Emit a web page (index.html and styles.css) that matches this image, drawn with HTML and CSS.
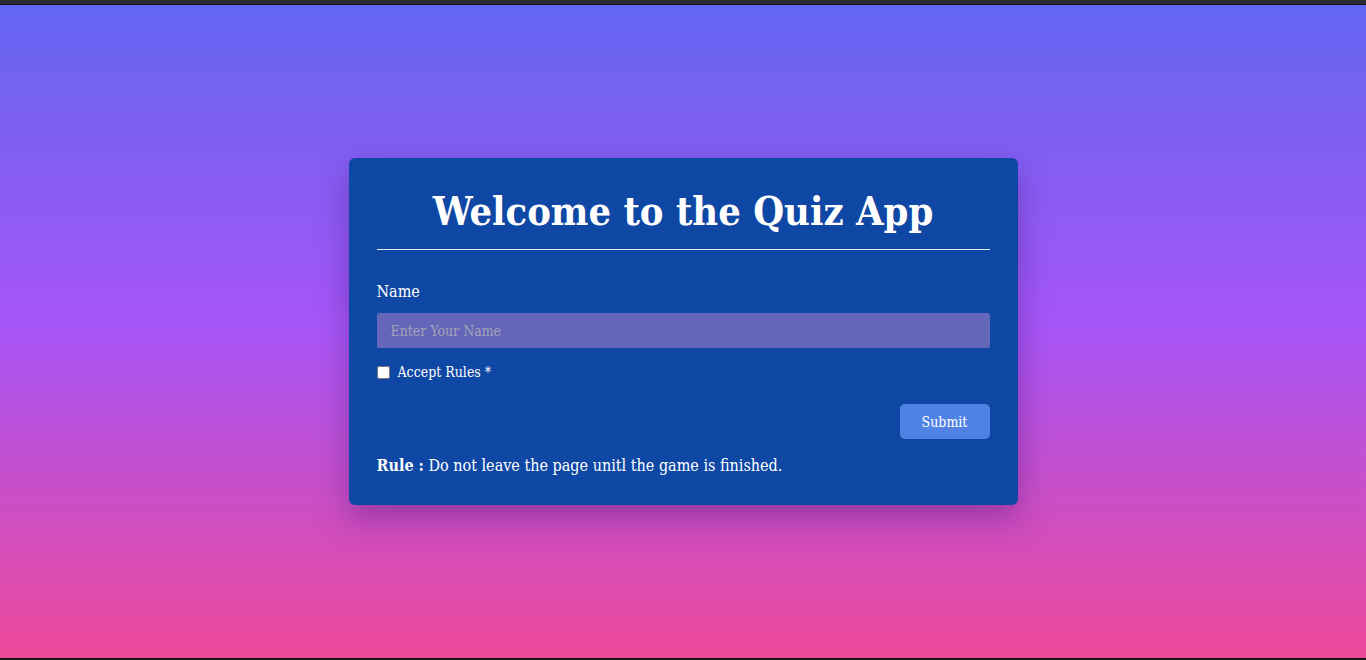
FILE: index.html
```html
<!DOCTYPE html>
<html lang="en">
<head>
<meta charset="utf-8">
<title>Quiz App</title>
<link rel="stylesheet" href="styles.css">
</head>
<body>
<div class="topbar"></div>
<main class="stage">
  <section class="card">
    <h1 class="title">Welcome to the Quiz App</h1>
    <hr class="divider">
    <form class="form">
      <label class="label" for="name">Name</label>
      <input class="input" id="name" type="text" placeholder="Enter Your Name">
      <label class="check">
        <input type="checkbox" class="checkbox">
        <span>Accept Rules *</span>
      </label>
      <div class="actions">
        <button type="button" class="btn">Submit</button>
      </div>
    </form>
    <p class="rule"><b>Rule :</b> Do not leave the page unitl the game is finished.</p>
  </section>
</main>
<div class="bottombar"></div>
</body>
</html>
```
FILE: styles.css
```css
* { box-sizing: border-box; }
html, body { height: 100%; }
body {
  margin: 0;
  display: flex;
  flex-direction: column;
  font-family: "DejaVu Serif", "Liberation Serif", serif;
  font-stretch: condensed;
  color: #fff;
  background: #111;
}
.topbar {
  height: 5px;
  background: #2a2a33;
  border-bottom: 1px solid #111;
  flex: none;
}
.bottombar {
  height: 2px;
  background: #141414;
  flex: none;
}
.stage {
  flex: 1;
  display: flex;
  align-items: center;
  justify-content: center;
  background: linear-gradient(to bottom, #6366f1, #a855f7, #ec4899);
}
.card {
  width: 669px;
  background: #0f47a4;
  border-radius: 6px;
  padding: 24px 28px 28px;
  box-shadow: 0 12px 32px rgba(60, 20, 110, 0.4);
}
.title {
  margin: 0;
  text-align: center;
  font-size: 39.5px;
  font-weight: 700;
  line-height: 58px;
}
.divider {
  margin: 9px 0 0;
  border: 0;
  border-top: 1px solid #e8ecf5;
}
.form {
  display: flex;
  flex-direction: column;
}
.label {
  margin-top: 31px;
  font-size: 16px;
  line-height: 22px;
}
.input {
  margin-top: 10px;
  height: 35px;
  border: 0;
  border-radius: 2px;
  background: #6366b9;
  padding: 0 14px;
  font-family: inherit;
  font-stretch: condensed;
  font-size: 14px;
  color: #fff;
  outline: none;
}
.input::placeholder { color: #a3a3b8; }
.check {
  margin-top: 14px;
  display: flex;
  align-items: center;
  gap: 8px;
  font-size: 14px;
  line-height: 20px;
}
.checkbox {
  margin: 0;
  width: 13px;
  height: 13px;
}
.actions {
  margin-top: 22px;
  display: flex;
  justify-content: flex-end;
}
.btn {
  width: 90px;
  height: 35px;
  border: 0;
  border-radius: 5px;
  background: #5082e4;
  color: #fff;
  font-family: inherit;
  font-stretch: condensed;
  font-size: 14px;
}
.rule {
  margin: 16px 0 0;
  font-size: 16px;
  line-height: 22px;
}
```
